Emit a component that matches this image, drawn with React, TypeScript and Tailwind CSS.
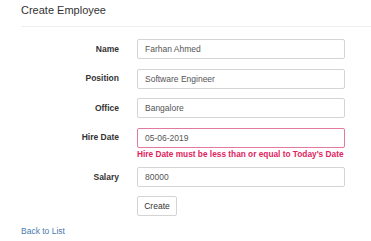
import React from "react";

const fields = [
  { label: "Name", value: "Farhan Ahmed" },
  { label: "Position", value: "Software Engineer" },
  { label: "Office", value: "Bangalore" },
];

function Row({ label, value, error, className = "" }: { label: string; value: string; error?: string; className?: string }) {
  return (
    <div className={className}>
      <div className="flex items-center">
        <label className="w-[99px] pr-[1px] text-right text-[8.5px] font-bold text-[#333]">{label}</label>
        <input
          readOnly
          value={value}
          className={`ml-[17px] h-[20px] w-[208px] rounded-[2px] border bg-white pl-[7px] text-[8.5px] text-[#555] outline-none ${
            error ? "border-[#e2799f]" : "border-[#d4d4d4]"
          }`}
        />
      </div>
      {error && (
        <div className="ml-[116px] mt-[1px] whitespace-nowrap text-[8.3px] font-bold leading-[10px] text-[#e0245e]">{error}</div>
      )}
    </div>
  );
}

export default function App() {
  return (
    <div className="min-h-[241px] bg-white pl-[21px] font-['Liberation_Sans',Arial,sans-serif]">
      <h2 className="pt-[4px] text-[11px] leading-[13px] text-[#333]">Create Employee</h2>
      <hr className="mt-[9px] border-t border-[#eee]" />

      <form className="mt-[12px] flex flex-col">
        {fields.map((f, i) => (
          <Row key={f.label} label={f.label} value={f.value} className={i === 0 ? "" : "mt-[9.5px]"} />
        ))}
        <Row
          label="Hire Date"
          value="05-06-2019"
          error="Hire Date must be less than or equal to Today's Date"
          className="mt-[9.5px]"
        />
        <Row label="Salary" value="80000" className="mt-[8.5px]" />
        <div className="mt-[9px] ml-[116px] flex">
          <button
            type="button"
            className="h-[20px] w-[40px] rounded-[2px] border border-[#d4d4d4] bg-white text-[8.5px] text-[#333]"
          >
            Create
          </button>
        </div>
      </form>

      <a href="#" className="mt-[9px] block text-[8.5px] leading-[12px] text-[#4a7ab0]">
        Back to List
      </a>
    </div>
  );
}
